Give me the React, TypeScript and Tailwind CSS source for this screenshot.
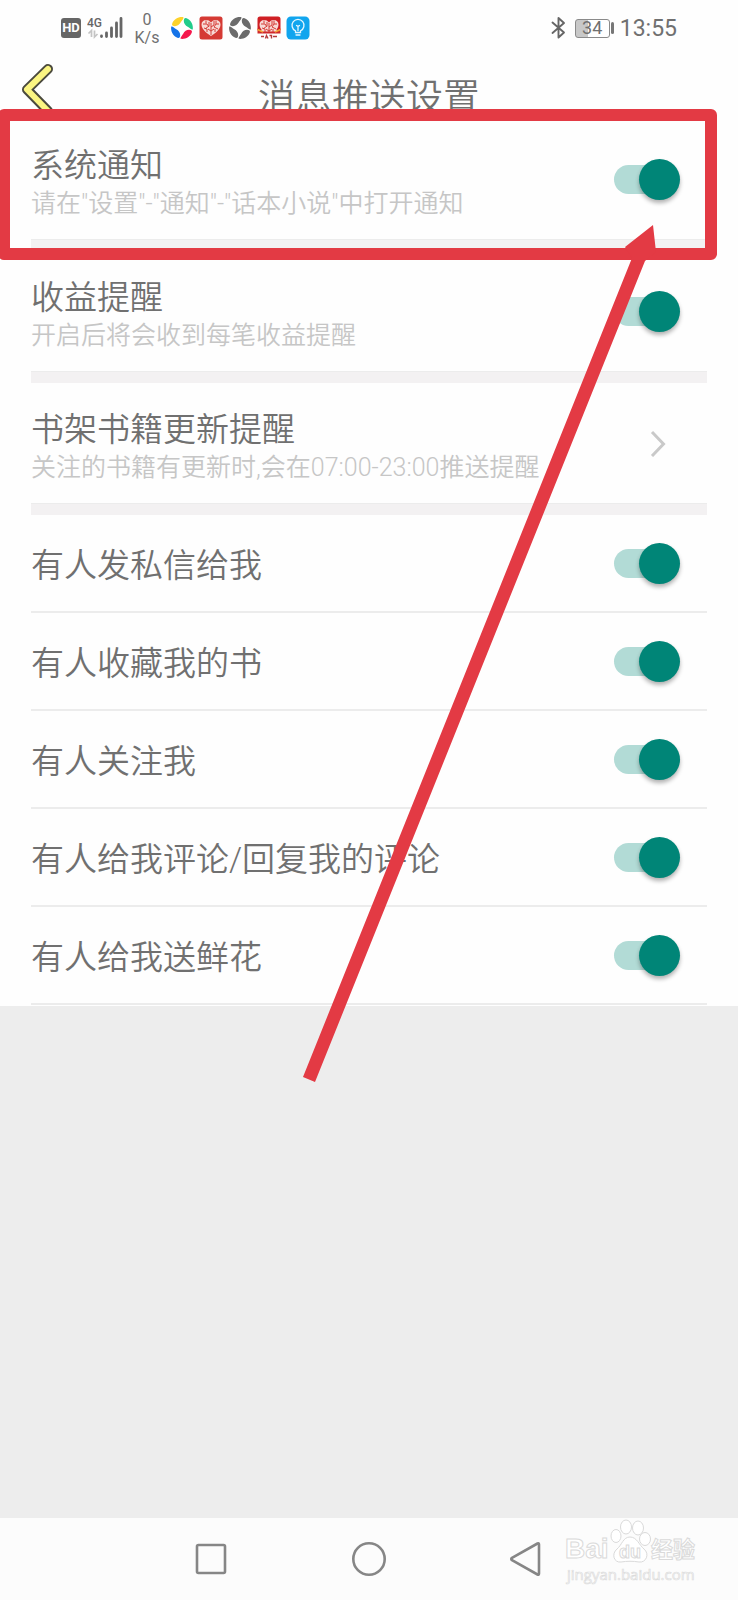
import React, { useState } from "react";

type DetailItem = {
  id: string;
  title: string;
  description: string;
  link?: boolean;
  marked?: boolean;
};

type SimpleItem = {
  id: string;
  title: string;
};

const detailItems: DetailItem[] = [
  {
    id: "system",
    title: "系统通知",
    description: '请在"设置"-"通知"-"话本小说"中打开通知',
    marked: true,
  },
  {
    id: "income",
    title: "收益提醒",
    description: "开启后将会收到每笔收益提醒",
  },
  {
    id: "shelf",
    title: "书架书籍更新提醒",
    description: "关注的书籍有更新时,会在07:00-23:00推送提醒",
    link: true,
  },
];

const simpleItems: SimpleItem[] = [
  { id: "message", title: "有人发私信给我" },
  { id: "favorite", title: "有人收藏我的书" },
  { id: "follow", title: "有人关注我" },
  { id: "comment", title: "有人给我评论/回复我的评论" },
  { id: "flower", title: "有人给我送鲜花" },
];

const SignalIcon = () => (
  <svg width="36" height="24" viewBox="0 0 36 24" aria-hidden="true">
    <text x="0" y="11" fontSize="12" fontWeight="500" fill="#666" fontFamily="Roboto, sans-serif">
      4G
    </text>
    <path d="M4.500 21V14.500l-3 3M7.500 14.500V21l3-3" fill="none" stroke="#c4c4c4" strokeWidth="1.700" />
    <g stroke="#666" strokeWidth="2.800" strokeLinecap="round">
      <path d="M14.500 20v0.500M19.500 17v3.500M24.500 12v8.500M29.500 7v13.500M34 2.500v18" />
    </g>
  </svg>
);

const SwirlIcon = ({ colors }: { colors: string[] }) => (
  <svg width="24" height="24" viewBox="0 0 24 24" aria-hidden="true">
    {colors.map((color, index) => (
      <path
        key={index}
        d="M2.200 7.500C4 3 8.500 0.500 13.500 1.200C13.800 2.800 11.800 4.500 10.800 6.300C9.500 8.600 7.500 10.200 5 10.200C2.800 10.200 1.500 9.200 2.200 7.500Z"
        fill={color}
        transform={`rotate(${index * 90} 12 12)`}
      />
    ))}
  </svg>
);

const HeartIcon = ({ banner }: { banner?: boolean }) => (
  <svg width="24" height="24" viewBox="0 0 24 24" aria-hidden="true">
    <rect x="0.500" y="0.500" width="23" height="23" rx="2.500" fill={banner ? "#fff" : "#d53a34"} />
    {banner && <path d="M3 0.500h18a2.500 2.500 0 0 1 2.500 2.500v11H0.500V3A2.500 2.500 0 0 1 3 0.500Z" fill="#cf1f24" />}
    <path
      d="M12 20C7 17 2.500 13 2.500 8.500C2.500 3.500 9 2.500 12 6.500C15 2.500 21.500 3.500 21.500 8.500C21.500 13 17 17 12 20Z"
      fill="#f7d9d5"
    />
    <path
      d="M4 8h4l2 3M7 4.500v3M10 6v4l-4 3M5 12l3 1v3M12 7v4l3-2V5M12 11v8M9 13l3 2 3-2M20 8h-3l-2 3 4 2M17 4.500V8M16 16v-3"
      fill="none"
      stroke="#d53a34"
      strokeWidth="1"
    />
    {banner && (
      <>
        <path d="M0 17h24v7H0Z" fill="#fff" />
        <path d="M0.500 12.500L6 15.500h12l5.500-3v5L18 17.500H6l-5.500 0Z" fill="#d0282b" />
        <path d="M0.500 13.500l5.500 2.500M23.500 13.500l-5.500 2.500" stroke="#f2a53b" strokeWidth="1.400" />
        <path d="M4 20.500h3M8.500 22.500l1-3 1.500 3M12.500 19.500h2v3M16 20.500h4" fill="none" stroke="#b53a3a" strokeWidth="1.400" />
      </>
    )}
  </svg>
);

const BulbIcon = () => (
  <svg width="24" height="24" viewBox="0 0 24 24" aria-hidden="true">
    <rect x="0.500" y="0.500" width="23" height="23" rx="4.500" fill="#11a5ee" />
    <g fill="none" stroke="#e6f7ff" strokeWidth="1.300" strokeLinecap="round">
      <path d="M9.500 16.500v-1.700a6 6 0 1 1 5 0v1.700Z" />
      <path d="M10 19h4M12 14.500v-4M10.500 9.500l1.500 1 1.500-1" />
    </g>
  </svg>
);

const BluetoothIcon = () => (
  <svg width="15" height="24" viewBox="0 0 15 24" aria-hidden="true">
    <path
      d="M1.500 6.500L13 16.500L7.500 21.500V2L13 7L1.500 17"
      fill="none"
      stroke="#666"
      strokeWidth="1.900"
      strokeLinejoin="round"
      strokeLinecap="round"
    />
  </svg>
);

const StatusBar = () => (
  <div className="flex h-14 items-center justify-between px-[61px] text-[#707070]">
    <div className="flex items-center">
      <span className="flex h-5 w-5 items-center justify-center rounded-[3px] bg-[#666] text-[13px] font-bold text-white">
        HD
      </span>
      <span className="ml-[6px]">
        <SignalIcon />
      </span>
      <span className="ml-3 flex w-6 flex-col items-center pt-0.5 text-base leading-[18px]">
        <span>0</span>
        <span>K/s</span>
      </span>
      <span className="ml-[11px] flex items-center gap-[5px]">
        <SwirlIcon colors={["#fdd22b", "#20cc8a", "#f5184c", "#1573e8"]} />
        <HeartIcon />
        <SwirlIcon colors={["#6b6b6b", "#6b6b6b", "#6b6b6b", "#6b6b6b"]} />
        <HeartIcon banner />
        <BulbIcon />
      </span>
    </div>
    <div className="flex items-center">
      <BluetoothIcon />
      <span className="ml-[9px] flex h-[19px] w-[35px] items-center justify-center rounded-[3px] border border-[#8a8a8a] bg-linear-to-r from-[#c8c8c8] from-35% to-white to-35% text-lg leading-none">
        34
      </span>
      <span className="ml-px h-3 w-[3px] rounded-sm bg-[#777]" />
      <span className="ml-[6px] pt-0.5 text-[23px]">13:55</span>
    </div>
  </div>
);

const Header = () => (
  <header className="grid h-[63px] grid-cols-[1fr_auto_1fr]">
    <button type="button" aria-label="返回" className="ml-[21px] h-[63px] w-9">
      <svg width="34" height="56" viewBox="0 0 34 56" aria-hidden="true">
        <g fill="none" strokeLinecap="round" strokeLinejoin="round">
          <path d="M27 9L6 29.500L27 51" stroke="#4b4a3d" strokeWidth="10" />
          <path d="M27 9L6 29.500L27 51" stroke="#fbf582" strokeWidth="6" />
        </g>
      </svg>
    </button>
    <h1 className="self-end text-[37px] leading-10 font-[350] text-[#707070]">消息推送设置</h1>
  </header>
);

type SwitchProps = {
  id: string;
  checked: boolean;
  onChange: (id: string) => void;
};

const Switch: React.FC<SwitchProps> = ({ id, checked, onChange }) => (
  <span className="relative mr-[27px] flex h-[41px] w-[66px] shrink-0 items-center">
    <input
      type="checkbox"
      id={id}
      checked={checked}
      onChange={() => onChange(id)}
      className="peer absolute inset-0 z-10 cursor-pointer opacity-0"
    />
    <span className="h-[29px] w-[62px] rounded-full bg-[#c9c9c9] peer-checked:bg-[#b2dbd6]" />
    <span className="absolute left-0 size-[41px] rounded-full bg-[#f1f1f1] shadow-[0_3px_4px_rgba(0,0,0,0.3)] peer-checked:left-auto peer-checked:right-0 peer-checked:bg-[#008577]" />
  </span>
);

const Watermark = () => (
  <svg
    className="absolute right-[36px] top-0 h-[68px] w-[140px]"
    viewBox="0 0 140 68"
    aria-label="Baidu经验"
  >
    <g fill="#fff" stroke="#dadada" strokeWidth="1">
      <ellipse cx="54" cy="18" rx="5" ry="6.500" />
      <ellipse cx="64" cy="9" rx="5.500" ry="7" />
      <ellipse cx="76" cy="10" rx="5.500" ry="7" />
      <ellipse cx="83" cy="21" rx="5.500" ry="6.500" />
      <path d="M68 19C75 19 77 27 82 31C88 36 84 45 77 44C71 43 65 43 59 44C52 45 49 36 55 31C60 27 61 19 68 19Z" />
      <text x="3" y="40" fontSize="28" fontWeight="700" fontFamily="'Liberation Sans', sans-serif">
        Bai
      </text>
      <text x="57" y="40" fontSize="18" fontWeight="700" fontFamily="'Liberation Sans', sans-serif">
        du
      </text>
      <text x="89" y="39" fontSize="22" fontWeight="700" fontFamily="'Noto Sans CJK SC', sans-serif">
        经验
      </text>
    </g>
    <text x="5" y="62" fontSize="15" fill="#fff" stroke="#dcdcdc" strokeWidth="0.700" fontFamily="'Open Sans', sans-serif">
      jingyan.baidu.com
    </text>
  </svg>
);

const NavBar = () => (
  <nav className="relative flex h-[82px] items-center justify-center gap-[122px] bg-[#fcfcfc]">
    <button type="button" aria-label="最近任务">
      <svg width="36" height="36" viewBox="0 0 36 36" fill="none" stroke="#868686" strokeWidth="2.600">
        <rect x="4" y="4" width="28" height="28" rx="1.500" />
      </svg>
    </button>
    <button type="button" aria-label="主屏幕">
      <svg width="36" height="36" viewBox="0 0 36 36" fill="none" stroke="#868686" strokeWidth="2.600">
        <circle cx="18" cy="18" r="15.700" />
      </svg>
    </button>
    <button type="button" aria-label="返回上一级">
      <svg width="36" height="36" viewBox="0 0 36 36" fill="none" stroke="#868686" strokeWidth="2.600" strokeLinejoin="round">
        <path d="M28.500 2.500Q30 1.700 30 3.500V32.500Q30 34.300 28.500 33.500L3 19.200Q1.500 18 3 16.800Z" />
      </svg>
    </button>
    <Watermark />
  </nav>
);

// red pointer that leads to the system notification switch
const Pointer = () => (
  <svg
    className="pointer-events-none absolute right-[81px] top-[224px] z-20 h-[860px] w-[360px]"
    viewBox="297 224 360 860"
    aria-hidden="true"
  >
    <path d="M303 1077L632 258L625 247L653 225L656 252L645 261L315 1082Z" fill="#e33a44" />
  </svg>
);

const App: React.FC = () => {
  const [enabled, setEnabled] = useState<Record<string, boolean>>({
    system: true,
    income: true,
    message: true,
    favorite: true,
    follow: true,
    comment: true,
    flower: true,
  });

  const toggle = (id: string) => {
    setEnabled((prev) => ({ ...prev, [id]: !prev[id] }));
  };

  return (
    <div className="relative flex min-h-screen flex-col overflow-hidden bg-[#ededed] font-[Roboto,'Noto_Sans_CJK_SC',sans-serif]">
      <div className="bg-[#fefefe]">
        <StatusBar />
        <Header />
        <main className="pb-px">
          <ul>
            {detailItems.map((item) => (
              <li key={item.id} className="relative px-[31px]">
                <div className="flex h-[120px] items-center justify-between">
                  <label htmlFor={item.id} className="pt-2.5 font-[350]">
                    <span className="block text-[33px] leading-10 text-[#707070]">{item.title}</span>
                    <span className="block text-[25px] leading-9 text-[#c6c6c6]">{item.description}</span>
                  </label>
                  {item.link ? (
                    <button type="button" id={item.id} aria-label={item.title} className="mr-[41px]">
                      <svg width="16" height="28" viewBox="0 0 16 28" fill="none" stroke="#c9c9c9" strokeWidth="3">
                        <path d="M2 3L13.500 15L2 27" />
                      </svg>
                    </button>
                  ) : (
                    <Switch id={item.id} checked={enabled[item.id]} onChange={toggle} />
                  )}
                </div>
                <div className="h-3 border-t border-[#ececec] bg-[#f3f1f2]" />
                {item.marked && (
                  <div className="pointer-events-none absolute -bottom-[9px] -left-[2px] -top-[10px] right-[21px] z-10 rounded-md border-[12px] border-[#e33a44]" />
                )}
              </li>
            ))}
          </ul>
          <ul className="mx-[31px]">
            {simpleItems.map((item) => (
              <li key={item.id} className="flex h-[98px] items-center justify-between border-b-2 border-[#ececec]">
                <label htmlFor={item.id} className="pt-1.5 text-[33px] leading-10 font-[350] text-[#707070]">
                  {item.title}
                </label>
                <Switch id={item.id} checked={enabled[item.id]} onChange={toggle} />
              </li>
            ))}
          </ul>
        </main>
      </div>
      <div className="flex-1" />
      <NavBar />
      <Pointer />
    </div>
  );
};

export default App;
